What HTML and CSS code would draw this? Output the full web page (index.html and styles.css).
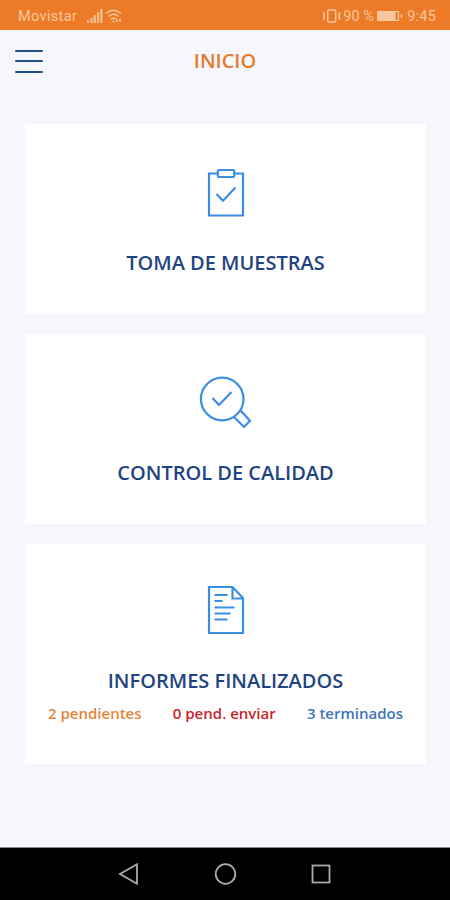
FILE: index.html
```html
<!DOCTYPE html>
<html lang="es">
    <head>
        <meta charset="UTF-8">
        <meta name="viewport" content="width=device-width, initial-scale=1.0">
        <title>Inicio</title>
        <link rel="stylesheet" href="styles.css">
    </head>

    <body>
        <div class="status-bar">
            <span class="carrier">Movistar</span>
            <svg class="signal" width="16" height="14" viewBox="0 0 16 14">
                <path d="M0 11h2v3H0zM3.3 9h2.300v5h-2.300zM6.600 6h2.300v8h-2.300zM9.900 3h2.300v11h-2.300zM13.200 0h2.300v14h-2.300z" />
            </svg>
            <svg class="wifi" width="18" height="14" viewBox="0 0 18 14">
                <path d="M1 4.500Q8.500-2 16 4.500M3.500 7.500Q8.500 3 13.500 7.500M6 10.300Q8.500 8 11 10.300" />
                <path d="M7.500 12.500h2M12 10v3M15 10v3" />
            </svg>
            <svg class="vibrate" width="18" height="14" viewBox="0 0 18 14">
                <rect x="4.700" y="1" width="8" height="12" rx="1" />
                <path d="M1 3v8M16.500 3v2.500l-1 1.500l1 1.500V11" />
            </svg>
            <span class="percent">90 %</span>
            <svg class="battery" width="26" height="10" viewBox="0 0 26 10">
                <rect x="0" y="0" width="18.500" height="10" />
                <path d="M18 .6h3.500v8.800H18M24.500 3v4" />
            </svg>
            <span class="clock">9:45</span>
        </div>

        <header>
            <button class="btn-menu" aria-label="Menú">
                <span></span>
                <span></span>
                <span></span>
            </button>
            <h1>INICIO</h1>
        </header>

        <main>
            <a class="card" href="#">
                <svg class="icon" width="60" height="60" viewBox="0 0 60 60">
                    <path d="M21.500 11.500H13v42h34v-42h-8.500" />
                    <rect x="21.800" y="8" width="16.400" height="7" rx="1" />
                    <path d="M20.500 32l6.500 6.700L39.500 25.500" />
                </svg>
                <h2>TOMA DE MUESTRAS</h2>
            </a>
            <a class="card" href="#">
                <svg class="icon" width="60" height="60" viewBox="0 0 60 60">
                    <circle cx="26.200" cy="27" r="21.300" />
                    <path d="M16.500 26l6.500 7L35.500 20M38 45l10 10l6-6.300l-10-10.700" />
                </svg>
                <h2>CONTROL DE CALIDAD</h2>
            </a>
            <a class="card card-reports" href="#">
                <svg class="icon" width="60" height="60" viewBox="0 0 60 60">
                    <path d="M13 7h23.500L47 18v35H13zM36.500 7v11.500H47" />
                    <path d="M18.500 15h13M18.500 21h8M18.500 27.500h20M18.500 33.500h16M18.500 39.500h13" />
                </svg>
                <h2>INFORMES FINALIZADOS</h2>
                <div class="totals">
                    <span class="pending">2 pendientes</span>
                    <span class="unsent">0 pend. enviar</span>
                    <span class="finished">3 terminados</span>
                </div>
            </a>
        </main>

        <nav class="nav-bar">
            <svg width="24" height="24" viewBox="0 0 24 24">
                <path d="M20 2.300v19.400L3 12z" />
            </svg>
            <svg width="24" height="24" viewBox="0 0 24 24">
                <circle cx="12.500" cy="12" r="9.800" />
            </svg>
            <svg width="24" height="24" viewBox="0 0 24 24">
                <rect x="3.500" y="3.500" width="17" height="17" />
            </svg>
        </nav>
    </body>

</html>
```
FILE: styles.css
```css
* {
    margin: 0;
    padding: 0;
    box-sizing: border-box;
    font-family: 'Open Sans', 'Noto Sans', sans-serif;
}

body {
    display: flex;
    flex-direction: column;
    height: 100vh;
    background: #f5f7fc;
    overflow: hidden;
}

svg {
    fill: none;
    flex-shrink: 0;
}

.status-bar {
    height: 30px;
    padding: 2px 14px 0 18px;
    background: #ec7a27;

    display: flex;
    align-items: center;

    & span {
        font-family: Roboto, sans-serif;
        font-size: 14.5px;
        color: #fac8a0;
        white-space: nowrap;
    }

    & svg {
        stroke: #fac8a0;
        stroke-width: 1.4;
    }

    .carrier {
        width: 60px;
        letter-spacing: 0.35px;
    }

    .signal {
        margin-left: 9px;
        margin-top: -1px;
        fill: #f8bd8f;
        stroke: none;
    }

    .wifi {
        margin-left: 2px;
        margin-top: -1px;
    }

    .vibrate {
        margin-left: auto;
    }

    .percent {
        margin-left: 2px;
        width: 31px;
    }

    .battery {
        margin-left: 3px;

        & rect {
            fill: #fac8a0;
            stroke: none;
        }
    }

    .clock {
        margin-left: 4px;
        letter-spacing: 0.2px;
    }
}

header {
    height: 62px;
    padding: 0 15px;

    display: grid;
    grid-template-columns: 29px 1fr 29px;
    align-items: center;

    & h1 {
        font-size: 20px;
        font-weight: 600;
        line-height: 62px;
        text-align: center;
        color: #e57a2c;
    }
}

.btn-menu {
    height: 23px;
    background: transparent;
    border: none;
    cursor: pointer;

    display: flex;
    flex-direction: column;
    justify-content: space-between;

    & span {
        width: 28px;
        height: 2px;
        border-radius: 1px;
        background: #24508f;
    }
}

main {
    flex: 1;
    padding: 32px 24px 0 25px;

    display: flex;
    flex-direction: column;
    gap: 20px;
}

.card {
    height: 190px;
    padding-top: 38px;
    background: white;
    text-decoration: none;

    display: flex;
    flex-direction: column;
    align-items: center;

    & .icon {
        stroke: #3a8de0;
        stroke-width: 2.2;
    }

    & h2 {
        margin-top: 27px;
        font-size: 20px;
        font-weight: 600;
        line-height: 28px;
        color: #1f4482;
    }
}

.card-reports {
    height: 220px;
    padding-top: 36px;
}

.totals {
    width: 100%;
    margin-top: 8px;
    padding: 0 23px;
    font-size: 15px;
    font-weight: 600;
    line-height: 20px;

    display: flex;
    justify-content: space-between;

    .pending {
        color: #e5853a;
    }

    .unsent {
        color: #c9252b;
    }

    .finished {
        color: #3c77b5;
    }
}

.nav-bar {
    height: 53px;
    background: black;
    border-top: 1px solid #888;

    display: flex;
    justify-content: center;
    align-items: center;
    gap: 72px;

    & svg {
        stroke: #aaa;
        stroke-width: 1.8;
    }
}
```
